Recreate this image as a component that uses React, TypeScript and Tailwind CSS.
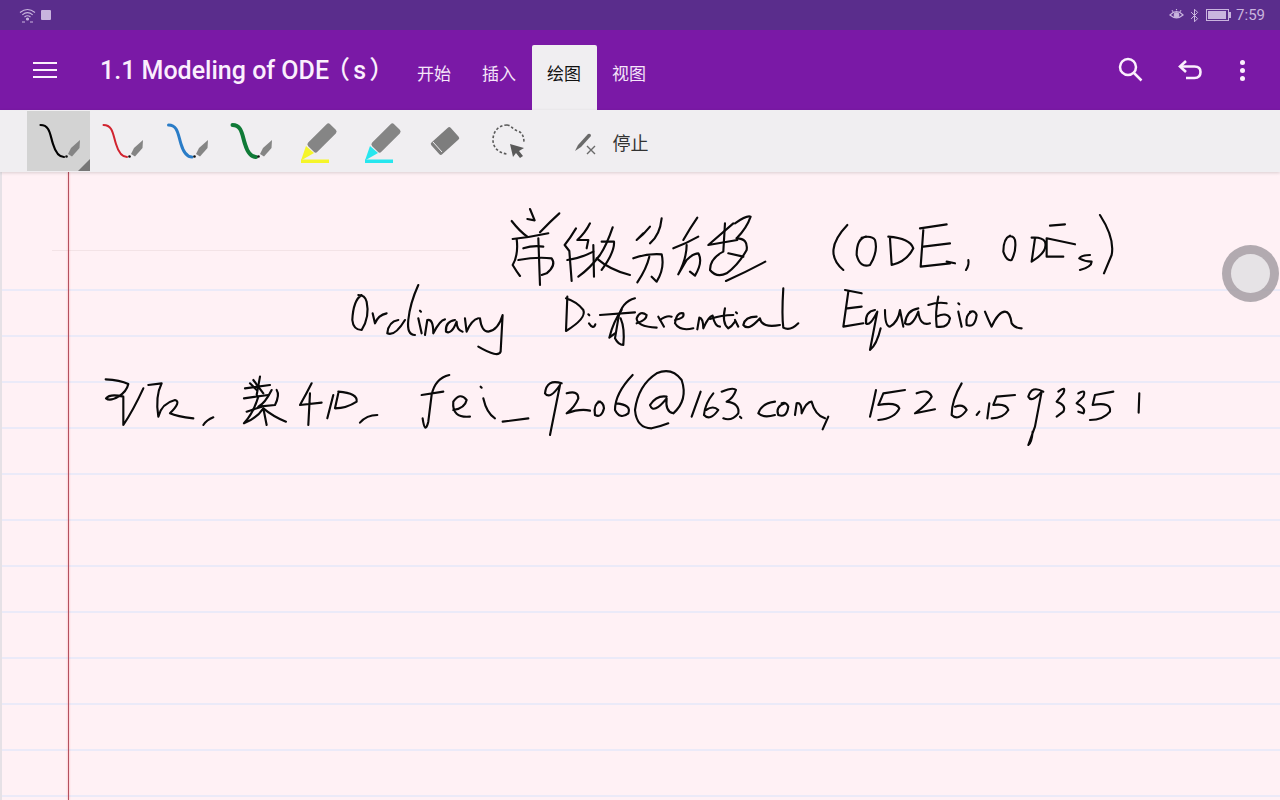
import { Bluetooth } from 'lucide-react';

// ink strokes, written in the coordinates of 3x crops of the page
const inkGroups: { x: number; y: number; strokes: string[] }[] = [
  {
    // title line, characters and "Differential"
    x: 490,
    y: 195,
    strokes: [
      'M120 42 L134 76 L112 72',
      'M65 78 Q90 110 112 125',
      'M208 55 Q180 80 150 112',
      'M68 132 Q120 127 175 115',
      'M80 132 Q86 180 68 210 Q80 230 90 243',
      'M100 160 Q130 150 160 155',
      'M85 195 Q140 185 185 190 Q200 210 170 235 L155 240',
      'M145 130 L150 270',
      'M258 100 Q240 130 224 150 L238 168 L245 258',
      'M300 85 Q285 115 262 135 L295 135 L290 160',
      'M232 195 Q270 190 310 170',
      'M310 150 L312 245',
      'M265 245 Q300 220 330 180 Q350 150 368 97',
      'M335 140 L372 140 Q375 170 335 225',
      'M320 190 Q360 225 420 240',
      'M480 95 Q460 120 440 135 L460 115',
      'M515 70 Q510 120 480 145',
      'M430 190 Q470 175 515 178 Q525 220 500 260 L485 245',
      'M478 185 Q470 220 442 262',
      'M622 68 Q600 100 580 135',
      'M550 160 Q590 145 625 125',
      'M590 150 Q590 190 565 238 L590 195 Q610 175 625 175 Q640 200 615 242 L600 230',
      'M730 85 L655 150 L742 135',
      'M705 85 L700 170 Q660 190 660 225 Q680 250 710 235 Q745 210 770 165 Q775 130 740 130',
      'M735 85 Q770 60 782 65 Q770 100 740 130',
      'M715 175 L760 185',
      'M708 258 Q770 230 826 200',
      'M232 305 L228 408 Q290 370 280 345 Q260 320 228 310',
      'M297 385 Q310 405 316 388',
      'M295 358 l3 3',
      'M330 360 L435 352',
      'M435 310 Q395 320 385 370 L375 430 Q385 450 400 450 Q405 400 392 370',
      'M395 345 Q370 380 358 428 L375 415',
      'M440 385 Q470 375 470 360 Q450 345 440 370 Q440 395 500 398',
      'M505 365 L522 395 M510 375 Q530 360 545 365',
      'M555 375 Q585 370 580 355 Q560 350 555 385 Q570 410 610 400',
      'M622 403 L628 368 Q640 370 640 400 Q655 365 668 362 Q675 395 690 395',
      'M660 372 Q695 360 730 360',
      'M705 340 Q695 385 715 400 Q725 395 735 380',
      'M735 375 L745 395 M738 352 l3 3',
      'M800 365 Q765 365 760 390 Q775 410 810 370 Q815 400 870 390',
      'M880 280 Q875 360 880 398 Q900 410 925 385',
    ],
  },
  {
    // (ODE, ODEs) and "Equation"
    x: 790,
    y: 195,
    strokes: [
      'M172 90 Q95 170 160 225',
      'M228 125 Q200 130 200 180 Q210 220 240 210 Q265 170 255 135 Q245 120 215 128',
      'M300 130 L305 210 Q350 200 370 160 Q360 130 295 125',
      'M390 100 L470 88 M400 105 L392 215 L480 205 M400 155 L480 145',
      'M470 200 L495 205',
      'M535 195 Q538 210 528 225',
      'M660 122 Q640 130 640 170 Q650 200 665 195 Q680 165 675 135 Q670 120 655 125',
      'M735 130 L725 200 Q775 170 765 140 Q755 125 725 128',
      'M780 92 L825 88',
      'M770 130 L770 185 L820 185 M770 130 L855 148',
      'M900 180 Q875 180 868 190 Q885 200 905 200 Q905 215 870 225',
      'M930 60 Q975 130 965 180 L942 235',
      'M165 285 L215 295 M175 290 L160 395 L220 385 M172 340 L215 335',
      'M255 345 Q225 350 228 385 Q240 395 262 350 L240 465 Q260 450 272 400',
      'M285 345 Q285 395 300 395 Q325 380 330 345 L340 395',
      'M385 340 Q350 345 345 385 Q365 400 385 350 Q390 395 420 385',
      'M415 330 Q445 320 470 325 M445 305 Q435 350 440 395 Q475 400 480 370 Q470 350 440 365',
      'M505 350 L515 395 M505 325 l3 3',
      'M545 350 Q525 360 530 390 Q555 400 560 360 Q555 345 540 350',
      'M585 350 Q595 375 605 395 Q625 350 645 350 Q660 350 665 385 Q675 400 695 400',
    ],
  },
  {
    // "Ordinary" and the start of the contact line
    x: 90,
    y: 280,
    strokes: [
      'M815 45 Q790 60 787 120 Q790 150 815 150 Q840 110 830 65 Q825 45 805 45',
      'M848 100 L855 130 Q865 105 890 100',
      'M925 120 Q895 125 892 160 Q915 170 945 120',
      'M985 15 Q960 70 955 120 Q950 165 975 165',
      'M985 115 L995 160 M990 92 l3 3',
      'M1005 165 L1012 120 Q1030 115 1030 160 Q1050 120 1065 118',
      'M1095 120 Q1065 125 1068 155 Q1085 165 1100 125 Q1100 150 1118 155',
      'M1125 115 L1130 155 Q1145 120 1165 115',
      'M1170 115 Q1175 155 1195 155 Q1225 150 1238 105 L1232 215 Q1225 235 1165 200',
      'M47 298 Q90 300 115 312 Q110 335 85 350 Q60 365 48 355 Q60 340 100 350 L100 435 Q130 390 160 325',
      'M175 315 L215 310 Q195 350 205 410 Q215 370 255 360 Q275 365 240 400 Q260 410 310 415',
      'M340 435 Q350 420 370 412',
      'M510 290 L500 345 M465 325 L540 315 M462 355 L535 345',
      'M480 310 L500 330',
      'M490 300 L520 340',
      'M470 395 L515 380',
      'M505 350 Q490 400 462 430 Q500 415 520 385 L530 435',
      'M545 330 Q525 370 505 380 L555 375 Q570 345 560 330',
      'M520 385 Q550 410 588 425',
      'M665 310 Q650 340 630 375 L695 368 M660 340 L655 435',
      'M730 345 L712 415',
      'M745 340 L735 385 Q770 385 800 365 Q805 340 745 335',
      'M810 428 Q830 405 862 405',
      'M1078 285 Q1035 295 1025 345 L1015 425 Q1005 465 998 415 M995 345 L1060 335',
      'M1090 390 Q1125 385 1130 360 Q1110 335 1090 365 Q1085 415 1140 410',
      'M1180 355 Q1190 400 1215 415 M1172 320 l3 3',
    ],
  },
  {
    // _9206@163.com,
    x: 500,
    y: 360,
    strokes: [
      'M8 185 L85 175',
      'M185 70 Q140 55 135 100 Q150 120 180 75 Q165 150 150 225',
      'M200 100 Q235 90 235 115 Q225 140 200 160 Q240 145 270 152',
      'M300 125 Q280 130 285 165 Q305 175 312 145 Q310 125 295 125',
      'M398 45 Q345 100 345 150 Q360 180 385 160 Q395 135 350 130',
      'M500 110 Q470 105 450 135 Q460 165 500 115 Q495 155 520 160 Q565 120 545 60 Q515 20 470 40 Q415 75 405 150 Q410 205 455 205 Q480 200 505 190',
      'M602 95 L575 170',
      'M640 100 Q615 130 612 165 Q630 185 655 150 Q640 135 618 150',
      'M665 95 Q700 80 708 90 Q700 115 680 125 Q720 130 715 160 Q695 185 670 175',
      'M720 170 l4 4',
      'M825 125 Q785 130 775 160 Q790 175 825 165',
      'M855 130 Q825 140 835 165 Q860 175 865 140 Q860 125 845 130',
      'M885 165 L890 130 Q905 125 905 160 Q920 125 935 125 Q945 165 975 175',
      'M985 170 L968 208',
    ],
  },
  {
    // phone number
    x: 850,
    y: 360,
    strokes: [
      'M78 90 Q70 130 60 170',
      'M165 90 L100 100 Q90 125 85 135 Q140 125 148 145 Q135 175 85 180',
      'M200 100 Q235 85 245 110 Q235 130 195 160 L255 148',
      'M335 70 Q305 120 305 165 Q325 185 350 150 Q340 130 315 140',
      'M380 165 L388 155',
      'M418 130 L412 175',
      'M495 105 L440 110 L430 135 Q470 130 475 150 Q460 175 425 175',
      'M580 95 Q545 75 535 110 Q545 130 575 95 L555 200 L535 255 Q545 250 548 215',
      'M625 95 Q650 75 640 100 L620 125 Q650 135 640 155 L620 170',
      'M685 100 Q710 85 700 110 L680 130 Q710 145 700 160 L685 155',
      'M790 95 L735 105 L728 135 Q785 125 780 155 Q760 180 720 180',
      'M868 100 L866 158',
    ],
  },
];

const pens = [
  { color: '#000000', width: 2.2, active: true },
  { color: '#d1232f', width: 2, active: false },
  { color: '#2a7cc7', width: 3, active: false },
  { color: '#0f7a37', width: 4, active: false },
];

function PenIcon({ color, width }: { color: string; width: number }) {
  return (
    <svg width="48" height="48" viewBox="0 0 48 48" fill="none">
      <path d="M5.5 8 C15 8 15 18 18 27 C21 37 25 40 29 40" stroke={color} strokeWidth={width} strokeLinecap="round" />
      <path d="M33 37 L36 31 L45 23 L44.5 31 L37 39.5 Z" fill="#858585" />
      <circle cx="31.5" cy="39.5" r="1.3" fill="#111111" />
    </svg>
  );
}

function HighlighterIcon({ color }: { color: string }) {
  return (
    <svg width="48" height="48" viewBox="0 0 48 48" fill="none">
      <rect x="14.5" y="14.5" width="31" height="13" rx="2.5" fill="#858585" transform="rotate(-45 30 21)" />
      <path d="M14 29 L22 36 L9 43.5 Z" fill={color} />
      <rect x="9" y="42.5" width="28" height="3.5" fill={color} />
    </svg>
  );
}

export default function App() {
  return (
    <div className="flex h-[800px] w-[1280px] flex-col overflow-hidden bg-[#fff1f5] font-[Roboto,'Noto_Sans_CJK_SC',sans-serif]">
      {/* Status bar */}
      <div className="flex h-[30px] shrink-0 items-center justify-between bg-[#5a2d8c] pl-[19px] pr-[15px] text-[#c9b5de]">
        <div className="flex items-center gap-[5px]">
          <svg width="17" height="15" viewBox="0 0 17 15" fill="none" stroke="currentColor" strokeWidth="1.1">
            <path d="M1 4.5 Q8.5 -1.5 16 4.5" />
            <path d="M3.3 6.8 Q8.5 2.5 13.7 6.8" />
            <path d="M5.5 9 Q8.5 6.5 11.5 9" />
            <circle cx="8.5" cy="11" r="1" fill="currentColor" />
            <path d="M3 14 h3 M11 14 h3" />
          </svg>
          <div className="h-[10px] w-[10px] rounded-[1px] bg-[#c9b5de]" />
        </div>
        <div className="flex items-center text-[15px]">
          <svg width="15" height="14" viewBox="0 0 16 14" fill="none" stroke="currentColor" strokeWidth="1.2">
            <path d="M1 7 Q8 0 15 7 Q8 13 1 7 Z" />
            <circle cx="8" cy="7" r="2.4" fill="currentColor" />
            <path d="M3 2 L4.5 3.5 M8 0.5 V2 M13 2 L11.5 3.5" />
          </svg>
          <Bluetooth size={15} strokeWidth={1.6} className="ml-[3px]" />
          <div className="ml-[4px] flex items-center">
            <div className="flex h-[12px] w-[23px] items-center border border-[#c9b5de] p-[1px]">
              <div className="h-full w-[18px] bg-[#c9b5de]" />
            </div>
            <div className="h-[6px] w-[2px] bg-[#c9b5de]" />
          </div>
          <span className="ml-[5px]">7:59</span>
        </div>
      </div>

      {/* App bar */}
      <div className="flex h-[80px] shrink-0 bg-[#7a19a6] text-white">
        <div className="ml-[33px] flex w-[24px] shrink-0 flex-col justify-center gap-[4.5px]">
          <div className="h-[2.5px] bg-[#fbeffd]" />
          <div className="h-[2.5px] bg-[#fbeffd]" />
          <div className="h-[2.5px] bg-[#fbeffd]" />
        </div>
        <div className="ml-[43px] flex w-[301.5px] shrink-0 items-center whitespace-pre pt-[2px] text-[25px] font-medium text-[#fbeffd]">
          1.1 Modeling of ODE<span className="-ml-[4px] tracking-[-1.5px]">（ s ）</span>
        </div>
        <div className="flex items-end">
          {['开始', '插入', '绘图', '视图'].map((tab) => (
            <div
              key={tab}
              className={
                tab === '绘图'
                  ? 'flex h-[65px] w-[65px] items-center justify-center rounded-t-[2px] bg-[#f0eef1] pb-[6px] text-[17px] text-[#111111]'
                  : 'flex h-[65px] w-[65px] items-center justify-center pb-[6px] text-[17px] text-[#f6e6fa]'
              }
            >
              {tab}
            </div>
          ))}
        </div>
        <div className="ml-auto flex items-center pr-[16px] text-[#fbeffd]">
          <div className="flex w-[60px] justify-center">
            <svg width="30" height="30" viewBox="0 0 30 30" fill="none" stroke="currentColor" strokeWidth="2.5">
              <circle cx="13" cy="12" r="8" />
              <path d="M19 18 L26.5 25.5" />
            </svg>
          </div>
          <div className="flex w-[60px] justify-center">
            <svg width="30" height="30" viewBox="0 0 30 30" fill="none" stroke="currentColor" strokeWidth="2.6">
              <path d="M11 6 L5 11.5 L11 17" />
              <path d="M5.5 11.5 H19.5 Q25.5 11.5 25.5 17 Q25.5 23 19.5 23 H11" />
            </svg>
          </div>
          <div className="flex w-[44px] flex-col items-center gap-[3px]">
            <div className="h-[5px] w-[5px] rounded-full bg-[#fbeffd]" />
            <div className="h-[5px] w-[5px] rounded-full bg-[#fbeffd]" />
            <div className="h-[5px] w-[5px] rounded-full bg-[#fbeffd]" />
          </div>
        </div>
      </div>

      {/* Ink toolbar */}
      <div className="z-10 flex h-[62px] shrink-0 items-center bg-[#f0eef1] pl-[27px] shadow-[0_1px_3px_rgba(0,0,0,0.15)]">
        {pens.map((pen) => (
          <div
            key={pen.color}
            className={
              pen.active
                ? 'relative flex h-[60px] w-[63px] items-center justify-center bg-[#d3d3d3]'
                : 'flex h-[60px] w-[64.5px] items-center justify-center'
            }
          >
            <PenIcon color={pen.color} width={pen.width} />
            {pen.active && (
              <div className="absolute bottom-0 right-0 h-0 w-0 border-b-[12px] border-l-[12px] border-b-[#777777] border-l-transparent" />
            )}
          </div>
        ))}
        <div className="flex h-[60px] w-[64px] items-center justify-center">
          <HighlighterIcon color="#f5f52a" />
        </div>
        <div className="flex h-[60px] w-[64px] items-center justify-center">
          <HighlighterIcon color="#27e6ee" />
        </div>
        <div className="flex h-[60px] w-[66px] items-center justify-center">
          <svg width="36" height="36" viewBox="0 0 36 36">
            <rect x="5" y="10" width="26" height="16" rx="2" fill="#7d7d7d" transform="rotate(-42 18 18)" />
            <path d="M6 19 L15 29" stroke="#f0eef1" strokeWidth="1" />
          </svg>
        </div>
        <div className="flex h-[60px] w-[62px] items-center justify-center">
          <svg width="40" height="40" viewBox="0 0 40 40" fill="none">
            <path
              d="M18 4 C10 4 4 10 4 19 C4 27 10 32 18 33 M18 4 C22 4 24 9 29 10 C34 12 35 17 35 22"
              stroke="#5a5a5a"
              strokeWidth="1.6"
              strokeDasharray="2.6 2"
            />
            <path d="M21 23 L35 27 L30 30 L34 35 L31 37 L27 32 L24 36 Z" fill="#5a5a5a" />
          </svg>
        </div>
        <div className="ml-[31px] flex items-center pt-[4px]">
          <svg width="28" height="28" viewBox="0 0 28 28" fill="none">
            <path d="M4 22 L7 16 L17 5 Q20 4 20 7 L10 18 Z" fill="#6a6a6a" />
            <path d="M16 17 L24 25 M24 17 L16 25" stroke="#6a6a6a" strokeWidth="1.4" />
          </svg>
          <span className="ml-[14px] text-[18px] text-[#333333]">停止</span>
        </div>
      </div>

      {/* Notebook page */}
      <div className="relative flex-1 overflow-hidden">
        <div className="flex flex-col pt-[117px]">
          {Array.from({ length: 12 }, (_, i) => (
            <div key={i} className="h-[46px] shrink-0 border-t-2 border-t-[#ebeaf8]" />
          ))}
        </div>
        <div className="absolute bottom-0 left-0 top-0 w-[2px] bg-[#e6e1e6]" />
        <div className="absolute left-[52px] top-[78px] h-px w-[418px] bg-[#f3e3e6]" />
        <div className="absolute bottom-0 left-[68px] top-0 w-px bg-[#b5505e] shadow-[0_0_2px_rgba(230,80,90,0.6)]" />
        <svg
          className="absolute left-0 top-[-172px]"
          width="1280"
          height="800"
          fill="none"
          role="img"
          aria-label="常微分方程 (ODE, ODEs) Ordinary Differential Equation fei_9206@163.com"
        >
          {inkGroups.map((group) => (
            <g key={group.x} transform={`translate(${group.x} ${group.y}) scale(0.3333)`}>
              {group.strokes.map((d) => (
                <path key={d} d={d} stroke="#0a0a0a" strokeWidth="6.4" strokeLinecap="round" strokeLinejoin="round" />
              ))}
            </g>
          ))}
        </svg>
        {/* Floating stylus button */}
        <div className="absolute left-[1222px] top-[73px] flex h-[57px] w-[57px] items-center justify-center rounded-full bg-[#a59da3]/85">
          <div className="h-[39px] w-[39px] rounded-full bg-[#e6e3e6]" />
        </div>
      </div>
    </div>
  );
}
